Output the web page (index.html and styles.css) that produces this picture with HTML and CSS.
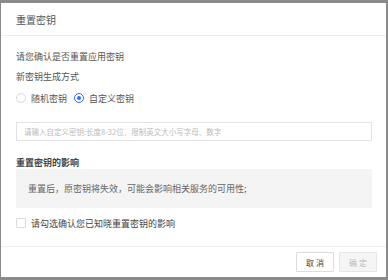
FILE: index.html
```html
<!DOCTYPE html>
<html lang="zh">
<head>
<meta charset="utf-8">
<link rel="stylesheet" href="styles.css">
</head>
<body>
<div class="modal">
  <div class="header">重置密钥</div>
  <div class="content">
    <div class="line first">请您确认是否重置应用密钥</div>
    <div class="line second">新密钥生成方式</div>
    <div class="radios">
      <label class="radio"><span class="circle"></span><span>随机密钥</span></label>
      <label class="radio"><span class="circle on"></span><span>自定义密钥</span></label>
    </div>
    <div class="input">请输入自定义密钥:长度8-32位、限制英文大小写字母、数字</div>
    <div class="heading">重置密钥的影响</div>
    <div class="note">重置后，原密钥将失效，可能会影响相关服务的可用性;</div>
    <label class="check"><span class="box"></span><span>请勾选确认您已知晓重置密钥的影响</span></label>
  </div>
  <div class="footer">
    <button class="btn">取消</button>
    <button class="btn disabled">确定</button>
  </div>
</div>
</body>
</html>
```
FILE: styles.css
```css
html, body {
  margin: 0;
  padding: 0;
}
body {
  background: #8a8a8a;
  padding: 3px 2px 0 1px;
  height: 280px;
  box-sizing: border-box;
  font-family: "Noto Sans CJK SC", "Noto Sans", sans-serif;
  color: #444;
}
.modal {
  width: 385px;
  height: 274px;
  background: #fff;
  display: flex;
  flex-direction: column;
  box-sizing: border-box;
}
.header {
  height: 33px;
  box-sizing: border-box;
  border-bottom: 1px solid #eeeeee;
  padding-left: 15px;
  font-size: 10px;
  line-height: 33px;
  color: #555;
}
.content {
  flex: 1;
  padding: 0 14px 0 15px;
  display: flex;
  flex-direction: column;
}
.line {
  font-size: 9px;
  line-height: 12px;
  color: #555;
}
.first { margin-top: 15px; }
.second { margin-top: 8px; }
.radios {
  margin-top: 9px;
  display: flex;
  gap: 7px;
  height: 12px;
  align-items: center;
}
.radio {
  display: flex;
  align-items: center;
  gap: 5px;
  font-size: 9px;
  color: #555;
}
.circle {
  width: 10px;
  height: 10px;
  border: 1px solid #d9d9d9;
  border-radius: 50%;
  box-sizing: border-box;
  position: relative;
}
.circle.on {
  border-color: #2d6cf6;
}
.circle.on::after {
  content: "";
  position: absolute;
  left: 2px;
  top: 2px;
  width: 4px;
  height: 4px;
  border-radius: 50%;
  background: #2d6cf6;
}
.input {
  margin-top: 18px;
  height: 19px;
  box-sizing: border-box;
  border: 1px solid #e2e2e2;
  padding-left: 7px;
  font-size: 7.5px;
  line-height: 17px;
  color: #bbb;
}
.heading {
  margin-top: 16px;
  font-size: 9px;
  line-height: 12px;
  font-weight: 700;
  color: #444;
}
.note {
  height: 39px;
  background: #f4f4f4;
  padding-left: 12px;
  font-size: 9px;
  line-height: 39px;
  color: #666;
}
.check {
  margin-top: 9px;
  display: flex;
  align-items: center;
  gap: 5px;
  height: 12px;
  font-size: 9px;
  color: #444;
}
.box {
  width: 10px;
  height: 10px;
  border: 1px solid #dcdcdc;
  box-sizing: border-box;
  border-radius: 1px;
}
.footer {
  height: 31px;
  box-sizing: border-box;
  border-top: 1px solid #f0f0f0;
  padding: 5px 9px 0 0;
  display: flex;
  justify-content: flex-end;
  gap: 5px;
}
.btn {
  width: 38px;
  height: 20px;
  padding: 0;
  border: 1px solid #dcdcdc;
  background: #fff;
  font-family: inherit;
  font-size: 8px;
  letter-spacing: 2px;
  text-indent: 2px;
  color: #444;
  border-radius: 1px;
}
.btn.disabled {
  background: #f5f5f5;
  border-color: #e6e6e6;
  color: #bbb;
}
```
